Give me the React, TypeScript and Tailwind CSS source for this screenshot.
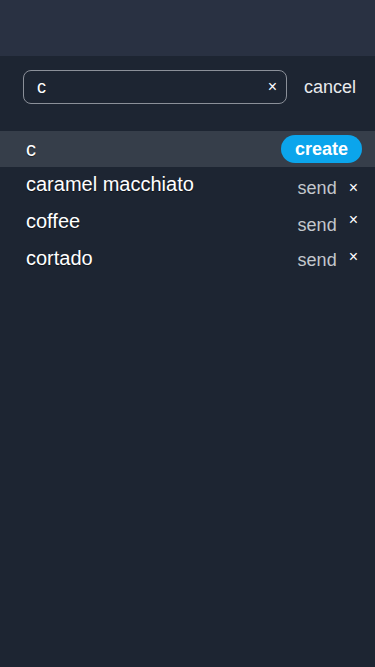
import { useState } from 'react';

const items = [
  { name: 'caramel macchiato', sendTop: 'mt-[8px]', closeTop: 'mt-[13px]' },
  { name: 'coffee', sendTop: 'mt-[8px]', closeTop: 'mt-[8px]' },
  { name: 'cortado', sendTop: 'mt-[6px]', closeTop: 'mt-[8px]' },
];

const App = () => {
  const [query, setQuery] = useState('c');

  return (
    <div className="w-full min-h-[667px] bg-[#1d2532] font-['Liberation_Sans',Arial,sans-serif] text-white">
      {/* Top bar */}
      <div className="h-[56px] bg-[#293142]" />

      {/* Search */}
      <div className="flex items-center pt-[14px] pl-[23px] pr-[19px]">
        <div className="flex items-center w-[264px] h-[34px] rounded-[8px] border border-[#8b9099] pl-[13px] pr-[9px]">
          <input
            value={query}
            onChange={(e) => setQuery(e.target.value)}
            className="flex-1 min-w-0 bg-transparent outline-none text-[18px] text-white"
          />
          <button className="text-[16px] leading-none text-white">×</button>
        </div>
        <button className="ml-auto text-[18px] text-[#e8eaed]">cancel</button>
      </div>

      {/* Results */}
      <div className="mt-[27px]">
        <div className="flex items-center h-[36px] bg-[#363e4a] pl-[26px] pr-[13px]">
          <span className="text-[20px] [text-shadow:0_1px_1px_rgba(0,0,0,0.5)]">{query}</span>
          <button className="ml-auto h-[28px] px-[14px] rounded-full bg-[#0ba5ec] text-[18px] font-bold leading-none text-white">
            create
          </button>
        </div>
        {items.map((item) => (
          <div key={item.name} className="flex items-start h-[37px] pl-[26px] pr-[17px]">
            <span className="mt-[2px] text-[20px] [text-shadow:0_1px_1px_rgba(0,0,0,0.5)]">{item.name}</span>
            <span className={`ml-auto text-[18px] text-[#c3c7cd] ${item.sendTop}`}>send</span>
            <span className={`ml-[12px] text-[16px] leading-none ${item.closeTop}`}>×</span>
          </div>
        ))}
      </div>
    </div>
  );
};

export default App;
